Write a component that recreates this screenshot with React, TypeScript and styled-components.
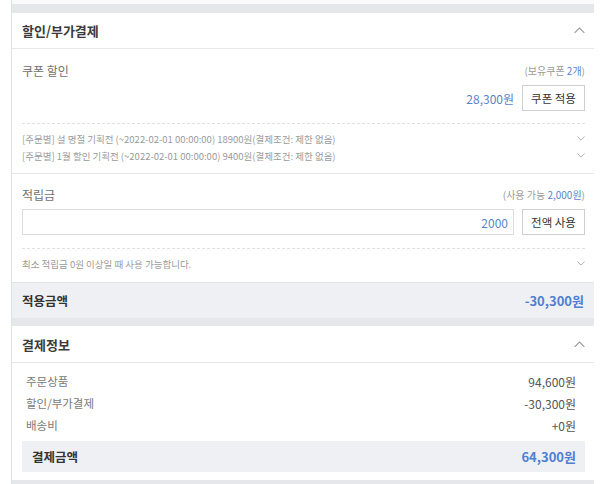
import React from "react";
import styled, { createGlobalStyle } from "styled-components";

const Global = createGlobalStyle`
  html, body { margin: 0; padding: 0; background: #ffffff; }
  body { font-family: "Noto Sans CJK KR", "Noto Sans", "Liberation Sans", sans-serif; color: #333; }
  * { box-sizing: border-box; }
`;

const BLUE = "#5a84c9";
const BLUE_BOLD = "#4f7fd3";

const Page = styled.div`
  margin-left: 11px;
  width: 583px;
  height: 484px;
  background: #e6e7eb;
  border-left: 1px solid #e0e1e5;
  overflow: hidden;
`;

const PrevCardEnd = styled.div`
  height: 4px;
  background: #fafafa;
  margin-bottom: 9px;
`;

const Card = styled.section`
  background: #fff;
`;

const CardHeader = styled.div<{ $h: number }>`
  height: ${(p) => p.$h}px;
  display: flex;
  align-items: center;
  justify-content: space-between;
  padding: 0 9px 0 10px;
  border-bottom: 1px solid #e6e6e8;
`;

const CardTitle = styled.h2`
  margin: 0;
  font-size: 13px;
  font-weight: 700;
  color: #3a3a3a;
`;

const Section = styled.div<{ $pt: number; $pb: number; $border?: boolean }>`
  padding: ${(p) => p.$pt}px 9px ${(p) => p.$pb}px 10px;
  border-bottom: ${(p) => (p.$border ? "1px solid #e6e6e8" : "none")};
`;

const LabelRow = styled.div`
  height: 16px;
  display: flex;
  align-items: center;
  justify-content: space-between;
`;

const Label = styled.span`
  font-size: 12px;
  color: #707070;
`;

const Hint = styled.span`
  font-size: 10px;
  color: #9a9a9a;
  b { font-weight: 400; color: ${BLUE}; }
`;

const ActionRow = styled.div`
  margin-top: 7px;
  height: 26px;
  display: flex;
  align-items: center;
  gap: 8px;
`;

const Amount = styled.span`
  margin-left: auto;
  font-size: 12px;
  color: ${BLUE};
`;

const Input = styled.div`
  flex: 1;
  height: 26px;
  border: 1px solid #dcdcdc;
  display: flex;
  align-items: center;
  justify-content: flex-end;
  padding-right: 5px;
  font-size: 12px;
  color: ${BLUE};
`;

const Button = styled.button`
  width: 63px;
  height: 26px;
  padding: 0;
  border: 1px solid #cfcfcf;
  background: #fff;
  font-family: inherit;
  font-size: 11.5px;
  color: #333;
  flex: none;
`;

const Dashed = styled.div<{ $mt: number }>`
  margin-top: ${(p) => p.$mt}px;
  border-top: 1px dashed #e0e0e0;
`;

const Notes = styled.div<{ $pt: number }>`
  padding-top: ${(p) => p.$pt}px;
`;

const Note = styled.div`
  height: 17px;
  display: flex;
  align-items: center;
  justify-content: space-between;
  font-size: 9.5px;
  color: #9a9a9a;
  white-space: nowrap;
`;

const Summary = styled.div`
  height: 36px;
  background: #eef0f4;
  border-top: 1px solid #e2e4e8;
  display: flex;
  align-items: center;
  justify-content: space-between;
  padding: 0 10px 0 10px;
`;

const SummaryLabel = styled.span`
  font-size: 12.5px;
  font-weight: 700;
  color: #333;
`;

const SummaryValue = styled.span`
  font-size: 13px;
  font-weight: 700;
  color: ${BLUE_BOLD};
`;

const Gap = styled.div`
  height: 8px;
`;

const InfoBody = styled.div`
  padding: 7px 9px 8px 10px;
`;

const InfoRow = styled.div`
  height: 22px;
  display: flex;
  align-items: center;
  justify-content: space-between;
  padding: 0 9px 0 4px;
  font-size: 11.5px;
  color: #7a7a7a;
`;

const InfoValue = styled.span`
  font-size: 12px;
  color: #555;
`;

const TotalBox = styled.div`
  margin-top: 5px;
  height: 31px;
  background: #eef0f4;
  display: flex;
  align-items: center;
  justify-content: space-between;
  padding: 0 9px 0 10px;
`;

const Chevron = ({ up, size = 10 }: { up?: boolean; size?: number }) => (
  <svg width={size} height={size / 2 + 1} viewBox="0 0 10 6" fill="none" style={{ flex: "none" }}>
    <path
      d={up ? "M0.5 5.5 L5 1 L9.5 5.5" : "M0.5 0.5 L5 5 L9.5 0.5"}
      stroke="#9a9a9a"
      strokeWidth="1"
    />
  </svg>
);

export default function App() {
  return (
    <>
      <Global />
      <Page>
        <PrevCardEnd />
        <Card>
          <CardHeader $h={36}>
            <CardTitle>할인/부가결제</CardTitle>
            <Chevron up size={11} />
          </CardHeader>
          <Section $pt={13} $pb={9} $border>
            <LabelRow>
              <Label>쿠폰 할인</Label>
              <Hint>
                (보유쿠폰 <b>2개</b>)
              </Hint>
            </LabelRow>
            <ActionRow>
              <Amount>28,300원</Amount>
              <Button>쿠폰 적용</Button>
            </ActionRow>
            <Dashed $mt={12} />
            <Notes $pt={6}>
              <Note>
                <span>[주문별] 설 명절 기획전 (~2022-02-01 00:00:00) 18900원(결제조건: 제한 없음)</span>
                <Chevron size={8} />
              </Note>
              <Note>
                <span>[주문별] 1월 할인 기획전 (~2022-02-01 00:00:00) 9400원(결제조건: 제한 없음)</span>
                <Chevron size={8} />
              </Note>
            </Notes>
          </Section>
          <Section $pt={12} $pb={10}>
            <LabelRow>
              <Label>적립금</Label>
              <Hint>
                (사용 가능 <b>2,000원</b>)
              </Hint>
            </LabelRow>
            <ActionRow>
              <Input>2000</Input>
              <Button>전액 사용</Button>
            </ActionRow>
            <Dashed $mt={13} />
            <Notes $pt={6}>
              <Note>
                <span>최소 적립금 0원 이상일 때 사용 가능합니다.</span>
                <Chevron size={8} />
              </Note>
            </Notes>
          </Section>
          <Summary>
            <SummaryLabel>적용금액</SummaryLabel>
            <SummaryValue>-30,300원</SummaryValue>
          </Summary>
        </Card>
        <Gap />
        <Card>
          <CardHeader $h={37}>
            <CardTitle>결제정보</CardTitle>
            <Chevron up size={11} />
          </CardHeader>
          <InfoBody>
            <InfoRow>
              <span>주문상품</span>
              <InfoValue>94,600원</InfoValue>
            </InfoRow>
            <InfoRow>
              <span>할인/부가결제</span>
              <InfoValue>-30,300원</InfoValue>
            </InfoRow>
            <InfoRow>
              <span>배송비</span>
              <InfoValue>+0원</InfoValue>
            </InfoRow>
            <TotalBox>
              <SummaryLabel>결제금액</SummaryLabel>
              <SummaryValue>64,300원</SummaryValue>
            </TotalBox>
          </InfoBody>
        </Card>
      </Page>
    </>
  );
}
